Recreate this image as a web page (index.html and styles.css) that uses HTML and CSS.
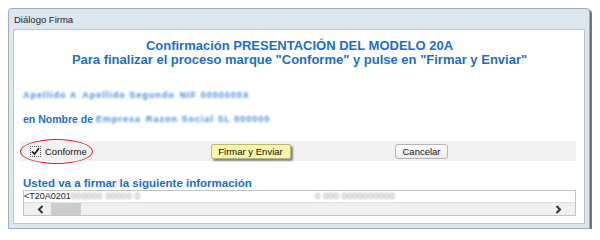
FILE: index.html
```html
<!DOCTYPE html>
<html>
<head>
  <title>Diálogo Firma</title>
  <link rel="stylesheet" href="styles.css">
</head>
<body>
  <div class="dialog">
    <div class="title">Diálogo Firma</div>
    <div class="panel">
      <h1 class="head">Confirmación PRESENTACIÓN DEL MODELO 20A<br>Para finalizar el proceso marque "Conforme" y pulse en "Firmar y Enviar"</h1>

      <p class="who"><span class="blur">Apellido A</span><span class="blur gap">Apellido Segundo</span><span class="blur gap">NIF 0000000X</span></p>
      <p class="who owner">en Nombre de <span class="blur">Empresa</span><span class="blur gap">Razon Social SL 000000</span></p>

      <div class="bar">
        <label class="check">
          <span class="box">
            <svg width="9" height="9" viewBox="0 0 9 9"><path d="M1 4.5 L3.5 7 L8 1.2" fill="none" stroke="#111" stroke-width="1.6"/></svg>
          </span>
          Conforme
        </label>
        <span class="cell"><button class="btn sign">Firmar y Enviar</button></span>
        <span class="cell"><button class="btn">Cancelar</button></span>
      </div>

      <p class="info-title">Usted va a firmar la siguiente información</p>
      <div class="textbox">
        <div class="line">&lt;T20A0201<span class="blur gray">000000 00000 0</span><span class="blur gray g2">0 000 0000000000</span></div>
        <div class="hscroll">
          <svg class="arrow" width="7" height="9" viewBox="0 0 7 9"><path d="M5.5 1 L2 4.5 L5.5 8" fill="none" stroke="#333" stroke-width="2"/></svg>
          <span class="thumb"></span>
          <svg class="arrow right" width="7" height="9" viewBox="0 0 7 9"><path d="M1.5 1 L5 4.5 L1.5 8" fill="none" stroke="#333" stroke-width="2"/></svg>
        </div>
      </div>
    </div>
  </div>
</body>
</html>
```

FILE: styles.css
```css
body {
  margin: 8px;
  background: #fff;
  font-family: "Liberation Sans", Arial, sans-serif;
}

.dialog {
  width: 582px;
  box-sizing: border-box;
  background: #dce6ee;
  border: 1px solid #a3acb5;
  border-radius: 4px 4px 0 0;
  padding: 0 4px 4px;
  box-shadow: 2px 2px 1px rgba(0, 0, 0, 0.55), 0 0 5px rgba(0, 0, 0, 0.2);
}

.title {
  height: 20px;
  line-height: 21px;
  padding-left: 1px;
  font-size: 9.5px;
  color: #1e1e1e;
}

.panel {
  background: #fff;
  border: 1px solid #bcc6cf;
  padding: 9px 8px 7px 9px;
}

.head {
  margin: 0;
  text-align: center;
  font-size: 13px;
  line-height: 14px;
  font-weight: bold;
  color: #1a6ed2;
}

.who {
  margin: 22px 0 0;
  font-size: 10.5px;
  line-height: 12px;
  font-weight: bold;
  color: #1a6ed2;
  white-space: nowrap;
}

.owner {
  margin-top: 12px;
}

/* texto pixelado del original */
.blur {
  display: inline-block;
  filter: blur(1.2px);
  color: #3f8ae2;
  font-size: 9px;
  font-weight: bold;
  letter-spacing: 1px;
  white-space: nowrap;
  vertical-align: top;
}

.gap {
  margin-left: 5px;
}

.bar {
  margin: 16px 0 0 -3px;
  height: 20px;
  background: #f1f1f1;
  display: grid;
  grid-template-columns: 145px 171px 171px 1fr;
  align-items: center;
  font-size: 9.5px;
  color: #111;
}

.check {
  position: relative;
  display: flex;
  align-items: center;
  gap: 4px;
  padding-left: 10px;
  height: 20px;
}

.check::after {
  content: "";
  position: absolute;
  left: 0;
  top: -2px;
  width: 71px;
  height: 23px;
  border: 1.5px solid #e31b1b;
  border-radius: 50%;
}

.box {
  width: 9px;
  height: 9px;
  border: 1px dotted #555;
  display: flex;
  align-items: center;
  justify-content: center;
}

.cell {
  display: flex;
  justify-content: center;
}

.btn {
  font-family: inherit;
  font-size: 9.5px;
  color: #111;
  height: 15px;
  padding: 0 6px;
  line-height: 13px;
  border: 1px solid #b4b4b4;
  border-radius: 3px;
  background: linear-gradient(#ffffff, #ececec);
}

.sign {
  width: 80px;
  padding: 0;
  border-color: #b9b87a;
  border-radius: 2px;
  background: #f8f7a6;
  box-shadow: 2px 2px 2px rgba(0, 0, 0, 0.45);
}

.info-title {
  margin: 16px 0 0;
  font-size: 11.5px;
  line-height: 13px;
  font-weight: bold;
  color: #1a6ed2;
}

.textbox {
  border: 1px solid #c4c4c4;
}

.line {
  height: 11px;
  line-height: 11px;
  font-size: 9px;
  color: #222;
  white-space: nowrap;
}

.gray {
  color: #9a9a9a;
  font-weight: normal;
  letter-spacing: 0.3px;
  filter: blur(1.2px);
  line-height: 11px;
}

.g2 {
  margin-left: 175px;
}

.hscroll {
  height: 12px;
  background: #f0f0f0;
  border-top: 1px solid #e2e2e2;
  display: flex;
  align-items: center;
  padding: 0 13px;
}

.thumb {
  width: 30px;
  height: 12px;
  margin-left: 7px;
  background: #cdcdcd;
}

.arrow.right {
  margin-left: auto;
}
```
